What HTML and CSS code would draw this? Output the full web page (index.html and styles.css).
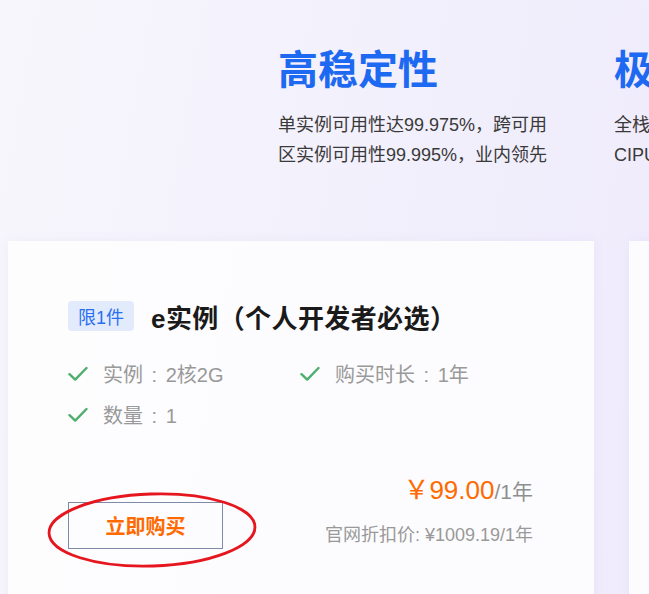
FILE: index.html
```html
<!DOCTYPE html>
<html lang="zh-CN">
<head>
<meta charset="utf-8">
<title>e实例</title>
<link rel="stylesheet" href="styles.css">
</head>
<body>
<div class="page">
  <section class="features">
    <div class="feat">
      <h2 class="feat-title">高稳定性</h2>
      <p class="feat-desc">单实例可用性达99.975%，跨可用<br>区实例可用性99.995%，业内领先</p>
    </div>
    <div class="feat">
      <h2 class="feat-title">极致性能</h2>
      <p class="feat-desc">全栈自研软硬一体化架构，基于<br>CIPU实现计算存储网络加速</p>
    </div>
  </section>

  <section class="cards">
    <div class="card">
      <div class="card-head">
        <span class="tag">限1件</span>
        <h3 class="card-title">e实例（个人开发者必选）</h3>
      </div>
      <ul class="specs">
        <li class="spec">
          <svg class="check" viewBox="0 0 20 16" width="20" height="16"><path d="M1.5 8.2 L7.2 13.6 L18.5 2" fill="none" stroke="#4fae6e" stroke-width="2.4" stroke-linecap="round" stroke-linejoin="round"/></svg>
          <span>实例 : 2核2G</span>
        </li>
        <li class="spec">
          <svg class="check" viewBox="0 0 20 16" width="20" height="16"><path d="M1.5 8.2 L7.2 13.6 L18.5 2" fill="none" stroke="#4fae6e" stroke-width="2.4" stroke-linecap="round" stroke-linejoin="round"/></svg>
          <span>购买时长 : 1年</span>
        </li>
        <li class="spec">
          <svg class="check" viewBox="0 0 20 16" width="20" height="16"><path d="M1.5 8.2 L7.2 13.6 L18.5 2" fill="none" stroke="#4fae6e" stroke-width="2.4" stroke-linecap="round" stroke-linejoin="round"/></svg>
          <span>数量 : 1</span>
        </li>
      </ul>
      <div class="buy-row">
        <div class="btn-wrap">
          <button class="buy-btn">立即购买</button>
          <svg class="circle-mark" viewBox="0 0 212 78" width="212" height="78"><ellipse cx="106" cy="39" rx="103" ry="36" fill="none" stroke="#e5161e" stroke-width="2.8" transform="rotate(-1.8 106 39)"/></svg>
        </div>
        <div class="price-box">
          <div class="price"><span class="price-num">￥99.00</span><span class="price-unit">/1年</span></div>
          <div class="orig">官网折扣价: ¥1009.19/1年</div>
        </div>
      </div>
    </div>
    <div class="card"></div>
  </section>
</div>
</body>
</html>
```

FILE: styles.css
```css
html, body {
  margin: 0;
  padding: 0;
  overflow: hidden;
}
body {
  width: 649px;
  height: 594px;
  font-family: "Liberation Sans", "Noto Sans CJK SC", sans-serif;
  background: linear-gradient(100deg, #f7f6fc 0%, #f3f1fc 45%, #efebfc 100%);
}
.page {
  width: 649px;
  height: 594px;
  overflow: hidden;
}
.features {
  display: flex;
  padding: 50px 0 0 278px;
  width: max-content;
}
.feat {
  width: 336px;
  flex-shrink: 0;
}
.feat-title {
  margin: 0;
  font-size: 40px;
  line-height: 40px;
  font-weight: 700;
  color: #1d69f1;
  white-space: nowrap;
}
.feat-desc {
  margin: 20px 0 0;
  font-size: 18px;
  line-height: 30px;
  color: #3a3a3a;
  white-space: nowrap;
}
.cards {
  display: flex;
  gap: 35px;
  padding-left: 8px;
  margin-top: 71px;
  width: max-content;
}
.card {
  width: 586px;
  height: 420px;
  flex-shrink: 0;
  box-sizing: border-box;
  padding: 60px 61px 0 60px;
  background: rgba(253, 253, 254, 0.92);
  box-shadow: 0 0 12px rgba(120, 110, 180, 0.06);
}
.card-head {
  display: flex;
  align-items: center;
  gap: 17px;
  height: 30px;
}
.tag {
  display: inline-flex;
  align-items: center;
  height: 30px;
  padding: 0 10px;
  border-radius: 4px;
  background: #e2ebfc;
  color: #2b6ff0;
  font-size: 18px;
  white-space: nowrap;
}
.card-title {
  margin: 0;
  font-size: 26px;
  font-weight: 700;
  color: #1a1a1a;
  white-space: nowrap;
  letter-spacing: 0.4px;
}
.specs {
  list-style: none;
  margin: 27px 0 0;
  padding: 0;
  display: grid;
  grid-template-columns: 232px 1fr;
  row-gap: 11px;
}
.spec {
  display: flex;
  align-items: center;
  gap: 15px;
  height: 30px;
  font-size: 20px;
  word-spacing: 3px;
  color: #999999;
  white-space: nowrap;
}
.check {
  flex-shrink: 0;
  margin-top: 1px;
}
.buy-row {
  display: flex;
  justify-content: space-between;
  align-items: flex-end;
  margin-top: 45px;
}
.btn-wrap {
  position: relative;
  width: 155px;
  height: 47px;
}
.buy-btn {
  width: 155px;
  height: 47px;
  box-sizing: border-box;
  border: 1px solid #7d8aa8;
  background: transparent;
  color: #ff6a00;
  font-family: "Noto Sans CJK SC", sans-serif;
  font-size: 20px;
  font-weight: 700;
  padding: 0;
  margin: 0;
}
.circle-mark {
  position: absolute;
  left: -22px;
  top: -11px;
  pointer-events: none;
}
.price-box {
  display: flex;
  flex-direction: column;
  align-items: flex-end;
  gap: 15px;
}
.price {
  line-height: 32px;
  height: 32px;
  white-space: nowrap;
}
.price-num {
  font-size: 26px;
  color: #ff6a00;
}
.price-unit {
  font-size: 21px;
  color: #8f8f8f;
}
.orig {
  font-size: 18px;
  line-height: 28px;
  color: #999999;
  white-space: nowrap;
}
```
